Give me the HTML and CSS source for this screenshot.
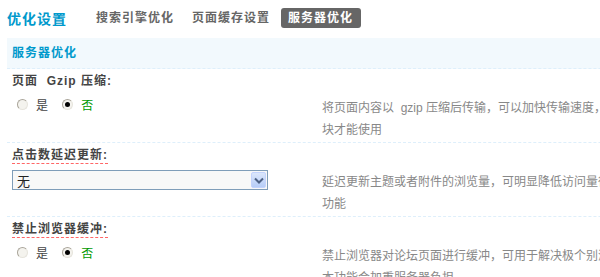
FILE: index.html
```html
<!DOCTYPE html>
<html lang="zh-CN">
<head>
    <meta charset="UTF-8">
    <title>优化设置</title>
    <link rel="stylesheet" href="styles.css">
</head>
<body>
    <div class="container">
        <div class="nav">
            <h3 class="nav-title">优化设置</h3>
            <a class="tab">搜索引擎优化</a>
            <a class="tab">页面缓存设置</a>
            <a class="tab current">服务器优化</a>
        </div>

        <div class="partition">服务器优化</div>

        <div class="section">
            <div class="label"><span>页面&nbsp; Gzip 压缩:</span></div>
            <div class="row">
                <div class="rowform">
                    <label class="radio"><i class="radio-box"></i>是</label>
                    <label class="radio checked"><i class="radio-box"></i>否</label>
                </div>
                <div class="tips">
                    <span>将页面内容以&nbsp; gzip 压缩后传输，可以加快传输速度，需 PHP 4.0.4 以上且支持 Zlib 模</span>
                    <span>块才能使用</span>
                </div>
            </div>
        </div>

        <div class="section">
            <div class="label"><span class="hint">点击数延迟更新:</span></div>
            <div class="row">
                <div class="rowform">
                    <div class="select">
                        <span class="select-value">无</span>
                        <span class="select-btn">
                            <svg width="10" height="7" viewBox="0 0 10 7"><path d="M1 1.5 L5 5.5 L9 1.5" fill="none" stroke="#4d6185" stroke-width="2"/></svg>
                        </span>
                    </div>
                </div>
                <div class="tips">
                    <span>延迟更新主题或者附件的浏览量，可明显降低访问量很大的站点的服务器负担，建议开启本</span>
                    <span>功能</span>
                </div>
            </div>
        </div>

        <div class="section">
            <div class="label"><span class="hint">禁止浏览器缓冲:</span></div>
            <div class="row">
                <div class="rowform">
                    <label class="radio"><i class="radio-box"></i>是</label>
                    <label class="radio checked"><i class="radio-box"></i>否</label>
                </div>
                <div class="tips">
                    <span>禁止浏览器对论坛页面进行缓冲，可用于解决极个别浏览器内容刷新不正常的问题。注意:</span>
                    <span>本功能会加重服务器负担</span>
                </div>
            </div>
        </div>
    </div>
</body>
</html>
```

FILE: styles.css
```css
body {
    margin: 0;
    padding: 0;
    background: #fff;
    color: #333;
    font-family: "Liberation Sans", "Noto Sans CJK SC", sans-serif;
    font-size: 12px;
    overflow: hidden;
}
.container {
    margin-left: 7px;
    width: 800px;
}
.nav {
    display: flex;
    align-items: center;
    height: 20px;
    padding-top: 8px;
    margin-bottom: 10px;
}
.nav-title {
    margin: 0 22px 0 0;
    font-size: 14px;
    font-weight: bold;
    letter-spacing: 1px;
    color: #09c;
}
.tab {
    height: 20px;
    line-height: 20px;
    padding: 0 7px;
    margin-right: 4px;
    font-weight: bold;
    letter-spacing: 1px;
    color: #666;
    border-radius: 3px;
}
.tab.current {
    background: #666;
    color: #fff;
    padding: 0 8px 0 7px;
}
.partition {
    height: 30px;
    line-height: 30px;
    padding-left: 5px;
    background: #f2f9fd;
    border-bottom: 1px dashed #deeffb;
    color: #09c;
    font-weight: bold;
    letter-spacing: 1px;
}
.section {
    border-top: 1px dashed #deeffb;
    padding: 0 0 1px 5px;
}
.partition + .section {
    border-top: none;
}
.label {
    padding-top: 4px;
    height: 17px;
}
.label span {
    display: inline-block;
    line-height: 16px;
    font-weight: bold;
    letter-spacing: 1px;
    color: #444;
}
.label .hint {
    border-bottom: 1px dashed #f66;
}
.row {
    display: flex;
    padding-top: 4px;
}
.rowform {
    width: 310px;
    flex-shrink: 0;
}
.radio {
    display: inline-flex;
    align-items: center;
    height: 20px;
    margin-left: 5px;
    margin-right: 11px;
    color: #444;
}
.radio + .radio {
    margin-left: 0;
}
.radio.checked {
    color: #090;
}
.radio-box {
    width: 9px;
    height: 9px;
    margin-right: 8px;
    border: 1px solid #a9a59a;
    border-right-color: #e6e4dc;
    border-bottom-color: #e6e4dc;
    border-radius: 50%;
    background: #f4f3ee;
    position: relative;
}
.checked .radio-box::after {
    content: "";
    position: absolute;
    left: 2px;
    top: 2px;
    width: 5px;
    height: 5px;
    border-radius: 50%;
    background: #000;
}
.select {
    display: flex;
    align-items: center;
    justify-content: space-between;
    width: 254px;
    height: 18px;
    margin-top: 2px;
    border: 1px solid #7f9db9;
    background: #f8f8f8;
}
.select-value {
    padding-left: 4px;
    font-size: 13px;
    color: #222;
}
.select-btn {
    display: flex;
    align-items: center;
    justify-content: center;
    width: 15px;
    height: 16px;
    margin-right: 1px;
    border-radius: 2px;
    background: linear-gradient(#dbe6fb, #b6cdf8);
    border: 1px solid #c3d3fd;
    box-sizing: border-box;
}
.tips {
    margin-top: 3px;
    line-height: 22px;
    color: #888;
    white-space: nowrap;
}
.tips span {
    display: block;
}
```
